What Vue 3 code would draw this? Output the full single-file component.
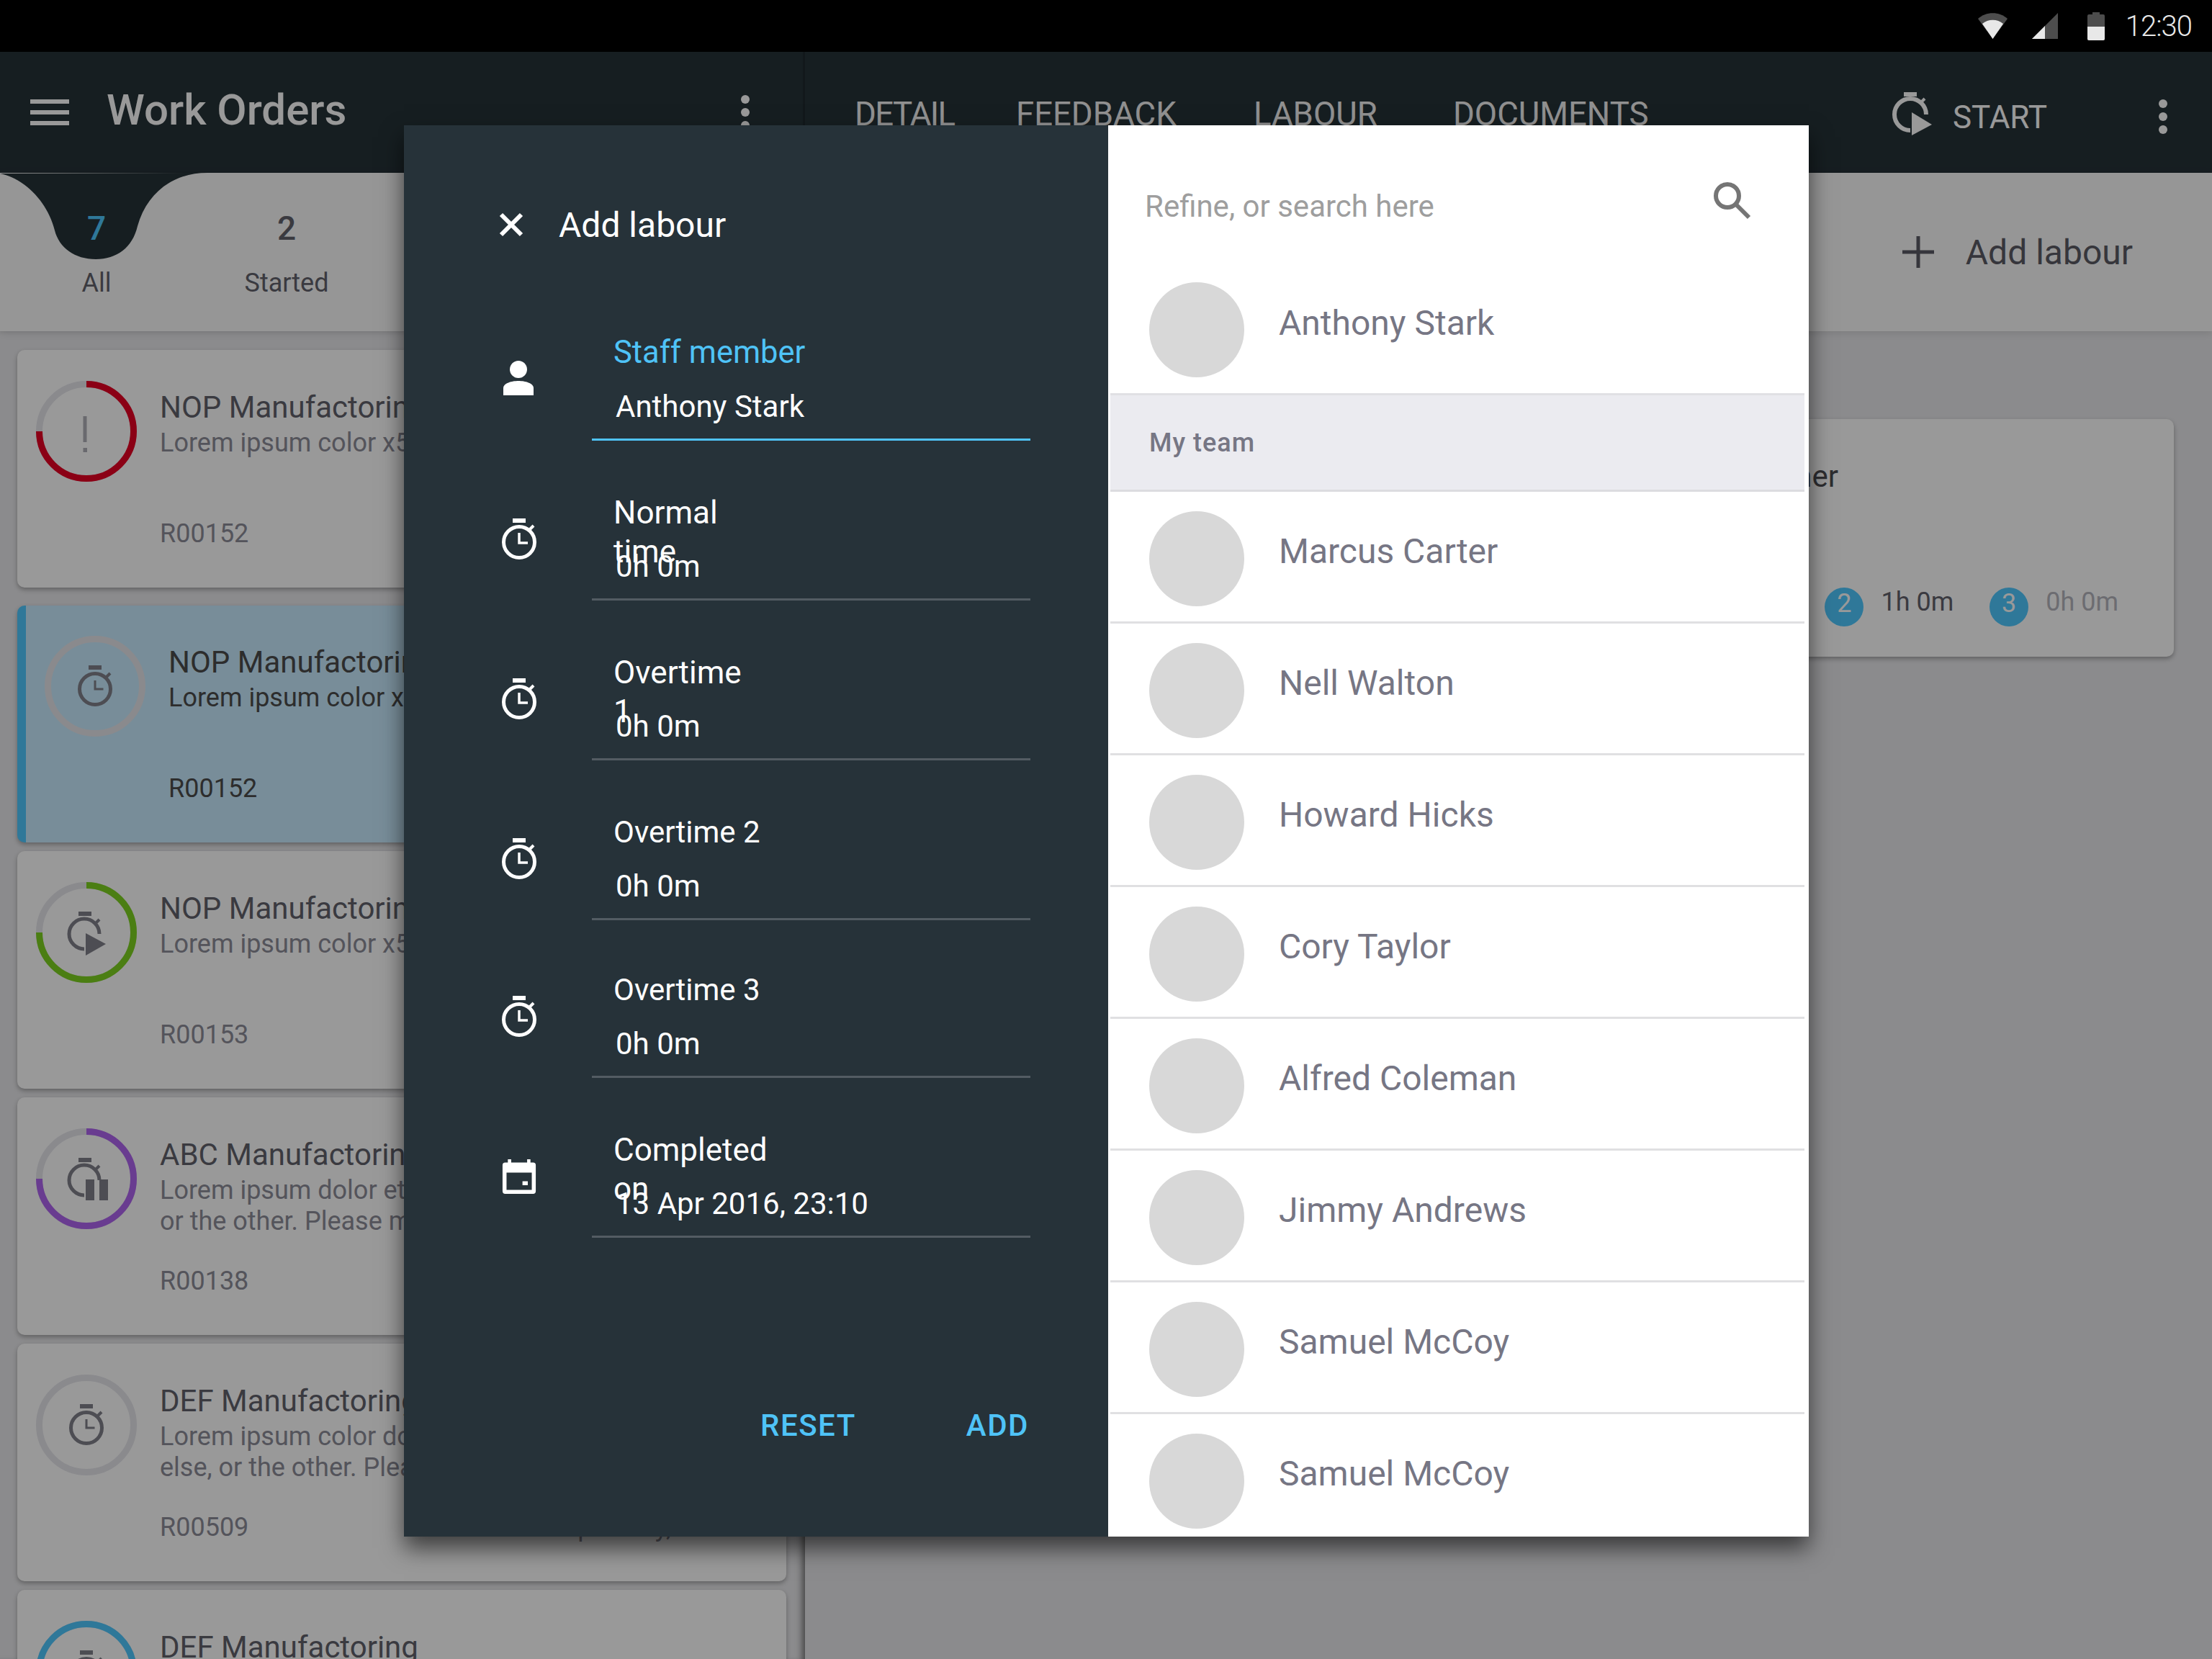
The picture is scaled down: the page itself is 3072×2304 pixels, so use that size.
<template>
  <div class="screen">
    <div class="status-bar">
      <svg class="st-wifi" viewBox="0 0 41 36"><path d="M0 8C11 -2.500 30 -2.500 41 8L20.500 36Z" fill="#4d4d4d"/><path d="M6 15C14 8 27 8 35 15L20.500 36Z" fill="#e8e8e8"/></svg>
      <svg class="st-signal" viewBox="0 0 36 36"><path d="M36 0V36H0Z" fill="#4d4d4d"/><path d="M18 18V36H0Z" fill="#e8e8e8"/></svg>
      <svg class="st-battery" viewBox="0 0 24 39"><path d="M7 0H17V3H22Q24 3 24 5V37Q24 39 22 39H2Q0 39 0 37V5Q0 3 2 3H7Z" fill="#4d4d4d"/><path d="M0 20H24V37Q24 39 22 39H2Q0 39 0 37Z" fill="#e8e8e8"/></svg>
      <span class="clock">12:30</span>
    </div>

    <div class="app">
      <section class="left-pane">
        <header class="left-bar">
          <div class="burger"><i></i><i></i><i></i></div>
          <span class="page-title">Work Orders</span>
          <div class="dots"><i></i><i></i><i></i></div>
        </header>
        <div class="filters">
          <svg class="notch" viewBox="0 0 290 120"><path d="M0 1C34 8 66 40 76 80C82 104 104 120 133 120C162 120 184 104 191 74C204 28 240 0 288 0Z" fill="#263238"/></svg>
          <div class="filter active"><b>7</b><span>All</span></div>
          <div class="filter"><b>2</b><span>Started</span></div>
        </div>
        <div class="cards">
          <article v-for="(card, i) in cards" :key="i" class="card" :class="{ selected: card.selected }">
            <svg class="ring" viewBox="0 0 140 140">
              <circle cx="70" cy="70" r="65.500" fill="none" stroke="#e6e6ec" stroke-width="9" />
              <circle v-if="card.arc" cx="70" cy="70" r="65.500" fill="none" :stroke="card.color" stroke-width="9" pathLength="100" :stroke-dasharray="card.arc + ' 100'" transform="rotate(-90 70 70)" />
              <g v-if="card.icon === 'alert'" fill="#b0b0b8">
                <rect x="65.500" y="49" width="5" height="36" />
                <rect x="65.500" y="93" width="5.500" height="6" />
              </g>
              <g v-else-if="card.icon === 'timer'" fill="none" stroke="#80808a" stroke-width="5">
                <rect x="61" y="41" width="18" height="6" fill="#80808a" stroke="none" />
                <path d="M85 58l6-6" stroke-width="4" />
                <circle cx="70" cy="74" r="21.500" />
                <path d="M70 62V74H81.500" stroke-width="3" />
              </g>
              <g v-else fill="none" stroke="#80808a" stroke-width="5">
                <rect x="59" y="41" width="18" height="6" fill="#80808a" stroke="none" />
                <path d="M82 58l6-6" stroke-width="4" />
                <path d="M67 93A21 21 0 1 1 88 72" />
                <path v-if="card.icon === 'play'" d="M69 71L97 86L69 102Z" fill="#80808a" stroke="none" />
                <path v-if="card.icon === 'pause'" d="M69 71H81V100H69ZM88 71H100V100H88Z" fill="#80808a" stroke="none" />
              </g>
            </svg>
            <div class="card-body">
              <h3>{{ card.title }}</h3>
              <p v-for="line in card.lines" :key="line">{{ line }}</p>
              <div class="card-ref">
                <span>{{ card.ref }}</span>
                <span v-if="card.meta" class="card-meta">{{ card.meta }}</span>
              </div>
            </div>
          </article>
        </div>
      </section>

      <section class="right-pane">
        <header class="right-bar">
          <nav class="tabs">
            <span>DETAIL</span><span>FEEDBACK</span><span>LABOUR</span><span>DOCUMENTS</span>
          </nav>
          <div class="start">
            <svg viewBox="0 0 56 60" class="start-icon"><rect x="16" y="0" width="18" height="6" fill="#fff"/><path d="M40 14l5-5" stroke="#fff" stroke-width="4"/><path d="M25 53A22 22 0 1 1 47 31" fill="none" stroke="#fff" stroke-width="6"/><path d="M27 28L55 45L27 60Z" fill="#fff"/></svg>
            <span>START</span>
          </div>
          <div class="dots"><i></i><i></i><i></i></div>
        </header>
        <div class="labour-strip">
          <svg viewBox="0 0 44 44" class="plus"><path d="M19.500 0H24.500V19.500H44V24.500H24.500V44H19.500V24.500H0V19.500H19.500Z" fill="#5a5a64"/></svg>
          <span>Add labour</span>
        </div>
        <div class="labour-card">
          <div class="labour-name">Labour planner</div>
          <div class="labour-times">
            <span class="badge">2</span><span class="hours">1h 0m</span>
            <span class="badge">3</span><span class="hours muted">0h 0m</span>
          </div>
        </div>
      </section>
    </div>

    <div class="scrim"></div>

    <div class="dialog">
      <div class="form-side">
        <div class="form-head">
          <svg viewBox="0 0 36 36" class="close"><path d="M4 4L32 32M32 4L4 32" stroke="#fff" stroke-width="6" fill="none"/></svg>
          <span>Add labour</span>
        </div>
        <div v-for="field in fields" :key="field.label" class="field" :class="{ focused: field.focused }">
          <div class="field-icon">
            <svg v-if="field.icon === 'person'" class="ic-person" viewBox="0 0 42 48" width="42" height="48"><circle cx="21" cy="12" r="12" fill="#fff"/><path d="M0 48V38C0 31 12 28 21 28S42 31 42 38V48Z" fill="#fff"/></svg>
            <svg v-else-if="field.icon === 'timer'" viewBox="0 0 50 57" width="50" height="57"><rect x="16" y="0" width="18" height="6" fill="#fff"/><circle cx="25" cy="33" r="21.500" fill="none" stroke="#fff" stroke-width="5"/><path d="M25 20V34H37" fill="none" stroke="#fff" stroke-width="3.500"/><path d="M40 15l5-5" stroke="#fff" stroke-width="4"/></svg>
            <svg v-else class="ic-calendar" viewBox="0 0 50 52" width="48" height="48"><path d="M8 0H13V5H37V0H42V5H46Q50 5 50 9V48Q50 52 46 52H4Q0 52 0 48V9Q0 5 4 5H8ZM6 20V46H44V20ZM30 33H38V39H30Z" fill="#fff" fill-rule="evenodd"/></svg>
          </div>
          <div class="field-box">
            <label :class="{ narrow: field.wrap }">{{ field.label }}</label>
            <div class="field-value">{{ field.value }}</div>
          </div>
        </div>
        <div class="form-actions">
          <span>RESET</span>
          <span>ADD</span>
        </div>
      </div>
      <div class="list-side">
        <div class="search">
          <span>Refine, or search here</span>
          <svg viewBox="0 0 54 54" class="search-icon"><circle cx="21" cy="21" r="16" fill="none" stroke="#757575" stroke-width="6"/><path d="M32 32L51 51" stroke="#757575" stroke-width="6"/></svg>
        </div>
        <div class="person first"><i></i><span>Anthony Stark</span></div>
        <div class="group-head">My team</div>
        <div v-for="(name, i) in team" :key="i" class="person"><i></i><span>{{ name }}</span></div>
      </div>
    </div>
  </div>
</template>

<script setup>
const cards = [
  { title: 'NOP Manufactoring', lines: ['Lorem ipsum color x5 dolor et'], ref: 'R00152', color: '#e80023', arc: 75, icon: 'alert' },
  { title: 'NOP Manufactoring', lines: ['Lorem ipsum color x5 dolor et'], ref: 'R00152', color: '#d0d0d8', arc: 0, icon: 'timer', selected: true },
  { title: 'NOP Manufactoring', lines: ['Lorem ipsum color x5 dolor et'], ref: 'R00153', color: '#7ed321', arc: 75, icon: 'play' },
  { title: 'ABC Manufactoring', lines: ['Lorem ipsum dolor et something', 'or the other. Please make sure'], ref: 'R00138', color: '#b065f0', arc: 75, icon: 'pause' },
  { title: 'DEF Manufactoring', lines: ['Lorem ipsum color dolor something', 'else, or the other. Please make sure'], ref: 'R00509', meta: 'Open day, 10:30', color: '#d0d0d8', arc: 0, icon: 'timer' },
  { title: 'DEF Manufactoring', lines: [], ref: 'R00510', color: '#4fc8ff', arc: 100, icon: 'timer' },
]

const fields = [
  { label: 'Staff member', value: 'Anthony Stark', icon: 'person', focused: true },
  { label: 'Normal time', value: '0h 0m', icon: 'timer', wrap: true },
  { label: 'Overtime 1', value: '0h 0m', icon: 'timer', wrap: true },
  { label: 'Overtime 2', value: '0h 0m', icon: 'timer' },
  { label: 'Overtime 3', value: '0h 0m', icon: 'timer' },
  { label: 'Completed on', value: '13 Apr 2016, 23:10', icon: 'calendar', wrap: true },
]

const team = [
  'Marcus Carter',
  'Nell Walton',
  'Howard Hicks',
  'Cory Taylor',
  'Alfred Coleman',
  'Jimmy Andrews',
  'Samuel McCoy',
  'Samuel McCoy',
]
</script>

<style>
html,
body {
  margin: 0;
  overflow: hidden;
}
</style>

<style scoped>
.screen {
  position: relative;
  width: 3072px;
  height: 2304px;
  overflow: hidden;
  font-family: Roboto, "Liberation Sans", sans-serif;
  background: #e8e8eb;
}

.status-bar {
  position: relative;
  z-index: 3;
  height: 72px;
  background: #000;
  display: flex;
  align-items: center;
  justify-content: flex-end;
  padding-right: 28px;
  box-sizing: border-box;
}
.st-wifi { width: 41px; height: 36px; margin-right: 34px; }
.st-signal { width: 36px; height: 36px; margin-right: 41px; }
.st-battery { width: 24px; height: 39px; margin-right: 29px; }
.clock { color: #e8e8e8; font-size: 40px; font-weight: 300; letter-spacing: -1px; }

.app {
  display: flex;
  height: 2232px;
}

.left-pane {
  width: 1118px;
  overflow: hidden;
  flex: none;
}
.left-bar {
  height: 168px;
  background: #263238;
  display: flex;
  align-items: center;
  padding: 0 74px 0 42px;
  box-sizing: border-box;
  border-right: 3px solid #1f282d;
}
.burger { width: 54px; display: flex; flex-direction: column; gap: 9px; margin-right: 52px; }
.burger i { height: 6px; background: #fff; display: block; }
.page-title { color: #fff; font-size: 60px; font-weight: 500; flex: 1; padding-bottom: 8px; }
.dots { display: flex; flex-direction: column; gap: 6px; }
.dots i { width: 12px; height: 12px; border-radius: 50%; background: #fff; display: block; }

.filters {
  position: relative;
  height: 220px;
  background: #fbfbfb;
  display: flex;
  align-items: flex-start;
  box-shadow: 0 2px 10px rgba(0, 0, 0, 0.12);
}
.notch { position: absolute; left: 0; top: 0; width: 290px; height: 120px; }
.filter {
  position: relative;
  width: 260px;
  display: flex;
  flex-direction: column;
  align-items: center;
  color: #62626c;
  font-size: 36px;
  padding-top: 50px;
}
.filter b { font-weight: 500; font-size: 46px; margin-bottom: 28px; }
.filter.active { width: 268px; }
.filter.active b { color: #4fc8ff; }

.cards {
  padding: 26px 26px 0 24px;
  display: flex;
  flex-direction: column;
  gap: 12px;
  height: 1844px;
  box-sizing: border-box;
  box-shadow: inset -10px 0 10px -6px rgba(0, 0, 0, 0.5);
}
.card {
  height: 330px;
  background: #fff;
  border-radius: 10px;
  box-shadow: 0 3px 6px rgba(0, 0, 0, 0.3);
  display: flex;
  align-items: flex-start;
  box-sizing: border-box;
  padding: 43px 0 53px 26px;
  flex: none;
}
.card.selected {
  height: 329px;
  background: #c8ecff;
  border-left: 12px solid #4fc8ff;
  padding: 42px 0 53px 26px;
  margin-top: 13px;
}
.ring { width: 140px; height: 140px; display: block; flex: none; }
.card-body {
  margin: 12px 0 0 32px;
  height: 222px;
  display: flex;
  flex-direction: column;
  color: #8c8c98;
  font-size: 36px;
  white-space: nowrap;
}
.card.selected .card-body { margin-left: 32px; color: #4c4c4c; }
.card-body h3 { margin: 0 0 3px; font-weight: 400; font-size: 42px; color: #62626c; line-height: 50px; }
.card.selected h3 { color: #4c4c4c; }
.card-body p { margin: 0; line-height: 43px; }
.card-ref { margin-top: auto; line-height: 44px; }
.card-meta { margin-left: 432px; }

.right-pane { flex: 1; min-width: 0; }
.right-bar {
  height: 168px;
  background: #263238;
  display: flex;
  align-items: center;
  padding: 0 62px 0 69px;
  box-sizing: border-box;
}
.right-bar .dots { margin-top: 12px; }
.tabs {
  display: grid;
  grid-template-columns: 224px 330px 277px auto;
  flex: 1;
  color: #f0f0f0;
  font-size: 45.500px;
  padding-top: 4px;
}
.tabs span:first-child { letter-spacing: -1.600px; }
.start { display: flex; align-items: center; color: #fff; font-size: 44px; gap: 28px; margin-right: 155px; }
.start span { margin-top: 14px; }
.start-icon { width: 56px; height: 60px; margin-top: 4px; }
.labour-strip {
  height: 220px;
  background: #fbfbfb;
  display: flex;
  align-items: center;
  justify-content: flex-end;
  gap: 44px;
  padding-right: 110px;
  color: #5a5a64;
  font-size: 48px;
  box-shadow: 0 2px 10px rgba(0, 0, 0, 0.12);
}
.plus { width: 44px; height: 44px; }
.labour-card {
  margin: 122px 53px 0 40px;
  height: 330px;
  background: #fff;
  border-radius: 10px;
  box-shadow: 0 3px 6px rgba(0, 0, 0, 0.3);
  padding-top: 55px;
  box-sizing: border-box;
  color: #4b4b50;
}
.labour-name { font-size: 42px; line-height: 50px; width: 1395px; text-align: right; }
.labour-times {
  display: flex;
  align-items: center;
  justify-content: flex-end;
  margin-top: 129px;
  padding-right: 77px;
  font-size: 36px;
}
.badge {
  width: 54px;
  height: 54px;
  border-radius: 50%;
  background: #4fc8ff;
  color: #fff;
  display: flex;
  justify-content: center;
  font-size: 36px;
  line-height: 44px;
}
.hours { margin: 0 50px 14px 24px; line-height: 40px; color: #62626c; }
.hours.muted { color: #b5b5bd; margin-right: 0; }

.scrim {
  position: absolute;
  inset: 72px 0 0;
  background: rgba(0, 0, 0, 0.4);
}

.dialog {
  position: absolute;
  left: 561px;
  top: 174px;
  width: 1951px;
  height: 1960px;
  display: flex;
  box-shadow: 0 16px 30px rgba(0, 0, 0, 0.6);
}
.form-side {
  width: 978px;
  background: #263239;
  box-sizing: border-box;
  padding: 106px 0 0 131px;
  color: #fff;
  display: flex;
  flex-direction: column;
}
.form-head { display: flex; align-items: center; gap: 48px; font-size: 48px; height: 64px; margin-bottom: 108px; flex: none; }
.close { width: 36px; height: 36px; }
.field { display: flex; height: 222px; flex: none; }
.field:nth-child(5) { height: 219px; }
.field-icon { width: 126px; padding: 46px 0 0 4px; flex: none; }
.field-icon svg { display: block; }
.ic-person { margin: 3px 0 0 3px; }
.ic-calendar { margin: 5px 0 0 1px; }
.field-box {
  width: 609px;
  height: 160px;
  border-bottom: 3px solid #535c63;
  position: relative;
  padding-left: 30px;
  box-sizing: border-box;
}
.field.focused .field-box { border-bottom-color: #4fc3f7; }
.field-box label {
  display: block;
  font-size: 42px;
  line-height: 54px;
  padding-top: 11px;
}
.field-box label.narrow { width: 200px; font-size: 44px; }
.field.focused label { color: #4fc3f7; font-size: 43.500px; }
.field-value {
  position: absolute;
  left: 33px;
  top: 86px;
  font-size: 42px;
  line-height: 54px;
}
.form-actions {
  display: flex;
  justify-content: flex-end;
  gap: 153px;
  color: #4fc3f7;
  font-size: 42px;
  font-weight: 500;
  letter-spacing: 1.500px;
  padding-right: 110px;
  margin-top: 174px;
}

.list-side { flex: 1; background: #fff; overflow: hidden; }
.search {
  height: 196px;
  display: flex;
  align-items: center;
  justify-content: space-between;
  padding: 28px 80px 0 51px;
  box-sizing: border-box;
  color: #9e9e9e;
  font-size: 42px;
}
.search-icon { width: 54px; height: 54px; margin-top: -16px; }
.person {
  height: 183px;
  display: flex;
  align-items: center;
  gap: 48px;
  box-sizing: border-box;
  padding: 5px 0 0 54px;
  margin: 0 6px 0 3px;
  border-bottom: 3px solid #e0e0e2;
  color: #767684;
  font-size: 48px;
}
.person i { width: 132px; height: 132px; border-radius: 50%; background: #d8d8d8; flex: none; }
.person span { margin-bottom: 20px; }
.person.first { border-bottom: none; height: 176px; padding-top: 0; }
.group-head {
  height: 137px;
  background: #ebebf0;
  border-top: 3px solid #e0e0e4;
  border-bottom: 3px solid #dcdce0;
  box-sizing: border-box;
  margin: 0 6px 0 3px;
  color: #767684;
  font-size: 36px;
  font-weight: 500;
  letter-spacing: 1px;
  display: flex;
  align-items: center;
  padding-left: 54px;
}
</style>
